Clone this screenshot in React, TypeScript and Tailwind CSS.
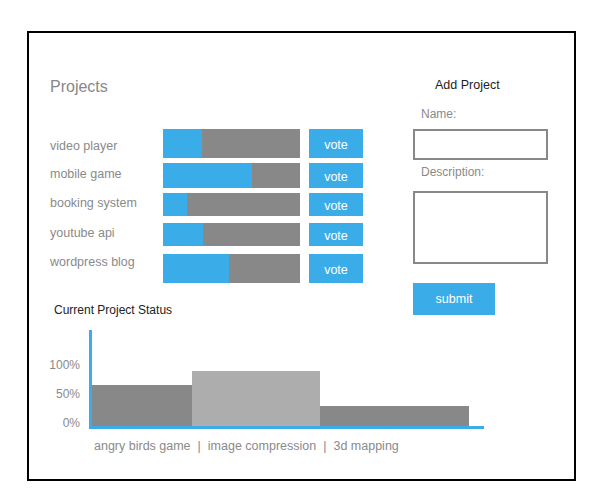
import React from "react";

const font = { fontFamily: '"Liberation Sans", Arial, sans-serif' };

const projects = [
  { name: "video player", fill: 39, rowClass: "h-[29px]", gapClass: "mt-0", labelPad: "pt-[10px]" },
  { name: "mobile game", fill: 89, rowClass: "h-[25px]", gapClass: "mt-[5px]", labelPad: "pt-[4px]" },
  { name: "booking system", fill: 24, rowClass: "h-[23px]", gapClass: "mt-[5px]", labelPad: "pt-[3px]" },
  { name: "youtube api", fill: 40, rowClass: "h-[23px]", gapClass: "mt-[7px]", labelPad: "pt-[3px]" },
  { name: "wordpress blog", fill: 66, rowClass: "h-[29px]", gapClass: "mt-[8px]", labelPad: "pt-[1px]" },
];

const status = [
  { name: "angry birds game", width: 100, height: 41, color: "bg-[#888888]" },
  { name: "image compression", width: 128, height: 55, color: "bg-[#adadad]" },
  { name: "3d mapping", width: 149, height: 20, color: "bg-[#888888]" },
];

export default function App() {
  return (
    <div className="min-h-[500px] w-[600px] bg-white pl-[27px] pt-[31px]" style={font}>
      <div className="w-[549px] h-[450px] border-2 border-black pt-[45px]">
        {/* ── Top: projects + form ───────────────────── */}
        <div className="flex">
          <div className="w-[384px] pl-[21px]">
            <h1 className="text-[16px] leading-[18px] text-[#888]">Projects</h1>

            <div className="mt-[33px]">
              {projects.map((p) => (
                <div key={p.name} className={`flex ${p.rowClass} ${p.gapClass}`}>
                  <div className={`w-[113px] text-[12.5px] leading-[15px] text-[#8a8a8a] ${p.labelPad}`}>
                    {p.name}
                  </div>
                  <div className="w-[137px] h-full bg-[#888888] flex">
                    <div className="h-full bg-[#3aade8]" style={{ width: p.fill }} />
                  </div>
                  <button className="ml-[9px] w-[54px] h-full bg-[#3aade8] text-white text-[12.5px] leading-[15px] pt-[3px]">
                    vote
                  </button>
                </div>
              ))}
            </div>

            <h2 className="mt-[20px] ml-[4px] text-[12px] leading-[14px] text-[#222]">
              Current Project Status
            </h2>
          </div>

          <div className="w-[135px] flex flex-col">
            <h2 className="ml-[22px] text-[12.5px] leading-[15px] text-[#222]">Add Project</h2>
            <label className="mt-[14px] ml-[8px] text-[12px] leading-[15px] text-[#8a8a8a]">Name:</label>
            <input className="mt-[7px] w-[135px] h-[31px] border-2 border-[#888] outline-none" />
            <label className="mt-[5px] ml-[8px] text-[12px] leading-[15px] text-[#8a8a8a]">Description:</label>
            <textarea className="mt-[11px] w-[135px] h-[73px] border-2 border-[#888] outline-none resize-none" />
            <button className="mt-[19px] w-[82px] h-[32px] bg-[#3aade8] text-white text-[12.5px] leading-[15px]">
              submit
            </button>
          </div>
        </div>

        {/* ── Chart ───────────────────────────────────── */}
        <div className="mt-[13px] pl-[20px] flex">
          <div className="w-[31px] pt-[28px] flex flex-col items-end gap-[15px] text-[12px] leading-[14px] text-[#8a8a8a]">
            <span>100%</span>
            <span>50%</span>
            <span>0%</span>
          </div>
          <div className="ml-[9px] w-[395px] h-[99px] border-l-[3px] border-b-[3px] border-[#3aade8] flex items-end">
            {status.map((s) => (
              <div key={s.name} className={s.color} style={{ width: s.width, height: s.height }} />
            ))}
          </div>
        </div>

        <div className="mt-[9px] pl-[65px] flex gap-[7px] text-[12.5px] leading-[14px] text-[#8a8a8a]">
          <span>angry birds game</span>
          <span className="text-[#888]">|</span>
          <span>image compression</span>
          <span className="text-[#888]">|</span>
          <span>3d mapping</span>
        </div>
      </div>
    </div>
  );
}
